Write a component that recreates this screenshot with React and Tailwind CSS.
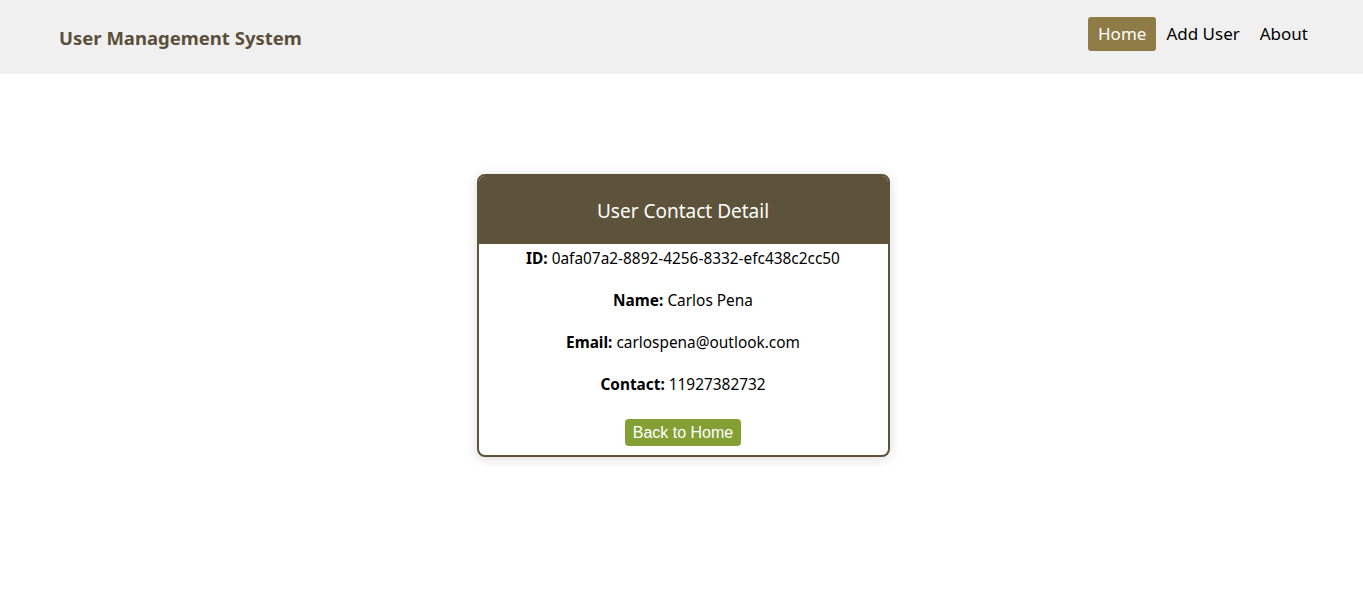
export default function App() {
  const font = { fontFamily: '"Noto Sans", "Open Sans", sans-serif' };
  return (
    <div className="min-h-screen bg-white" style={font}>
      <header className="flex h-[74px] items-center justify-between bg-[#f0f0f0] pl-[59px] pr-[45px]">
        <h1 className="mt-[2px] text-[18.5px] font-bold text-[#5c4f3a]">User Management System</h1>
        <nav className="mb-[6px] flex items-center gap-[10px] text-[17px] text-black">
          <a className="rounded-[3px] bg-[#8f7b45] px-[10px] py-[4px] text-white">Home</a>
          <a className="px-0 py-[4px]">Add User</a>
          <a className="px-[10px] py-[4px]">About</a>
        </nav>
      </header>

      <div className="flex justify-center pl-[3px] pt-[100px]">
        <div className="w-[413px] overflow-hidden rounded-[8px] border-2 border-[#5d533a] bg-white shadow-[0_2px_12px_rgba(0,0,0,0.15)]">
          <div className="flex h-[68px] items-center justify-center bg-[#5d533a] pt-[2px] text-[19px] text-white">
            User Contact Detail
          </div>
          <div className="flex flex-col items-center gap-[12px] text-[15.4px] text-black">
            <p className="leading-[30px]"><b>ID:</b> 0afa07a2-8892-4256-8332-efc438c2cc50</p>
            <p className="leading-[30px]"><b>Name:</b> Carlos Pena</p>
            <p className="leading-[30px]"><b>Email:</b> carlospena@outlook.com</p>
            <p className="leading-[30px]"><b>Contact:</b> 11927382732</p>
            <button
              className="mt-[7px] mb-[9px] h-[27px] rounded-[4px] bg-[#84a035] px-[8px] text-[16px] text-white"
              style={{ fontFamily: '"Liberation Sans", Arial, sans-serif' }}
            >
              Back to Home
            </button>
          </div>
        </div>
      </div>
    </div>
  );
}
